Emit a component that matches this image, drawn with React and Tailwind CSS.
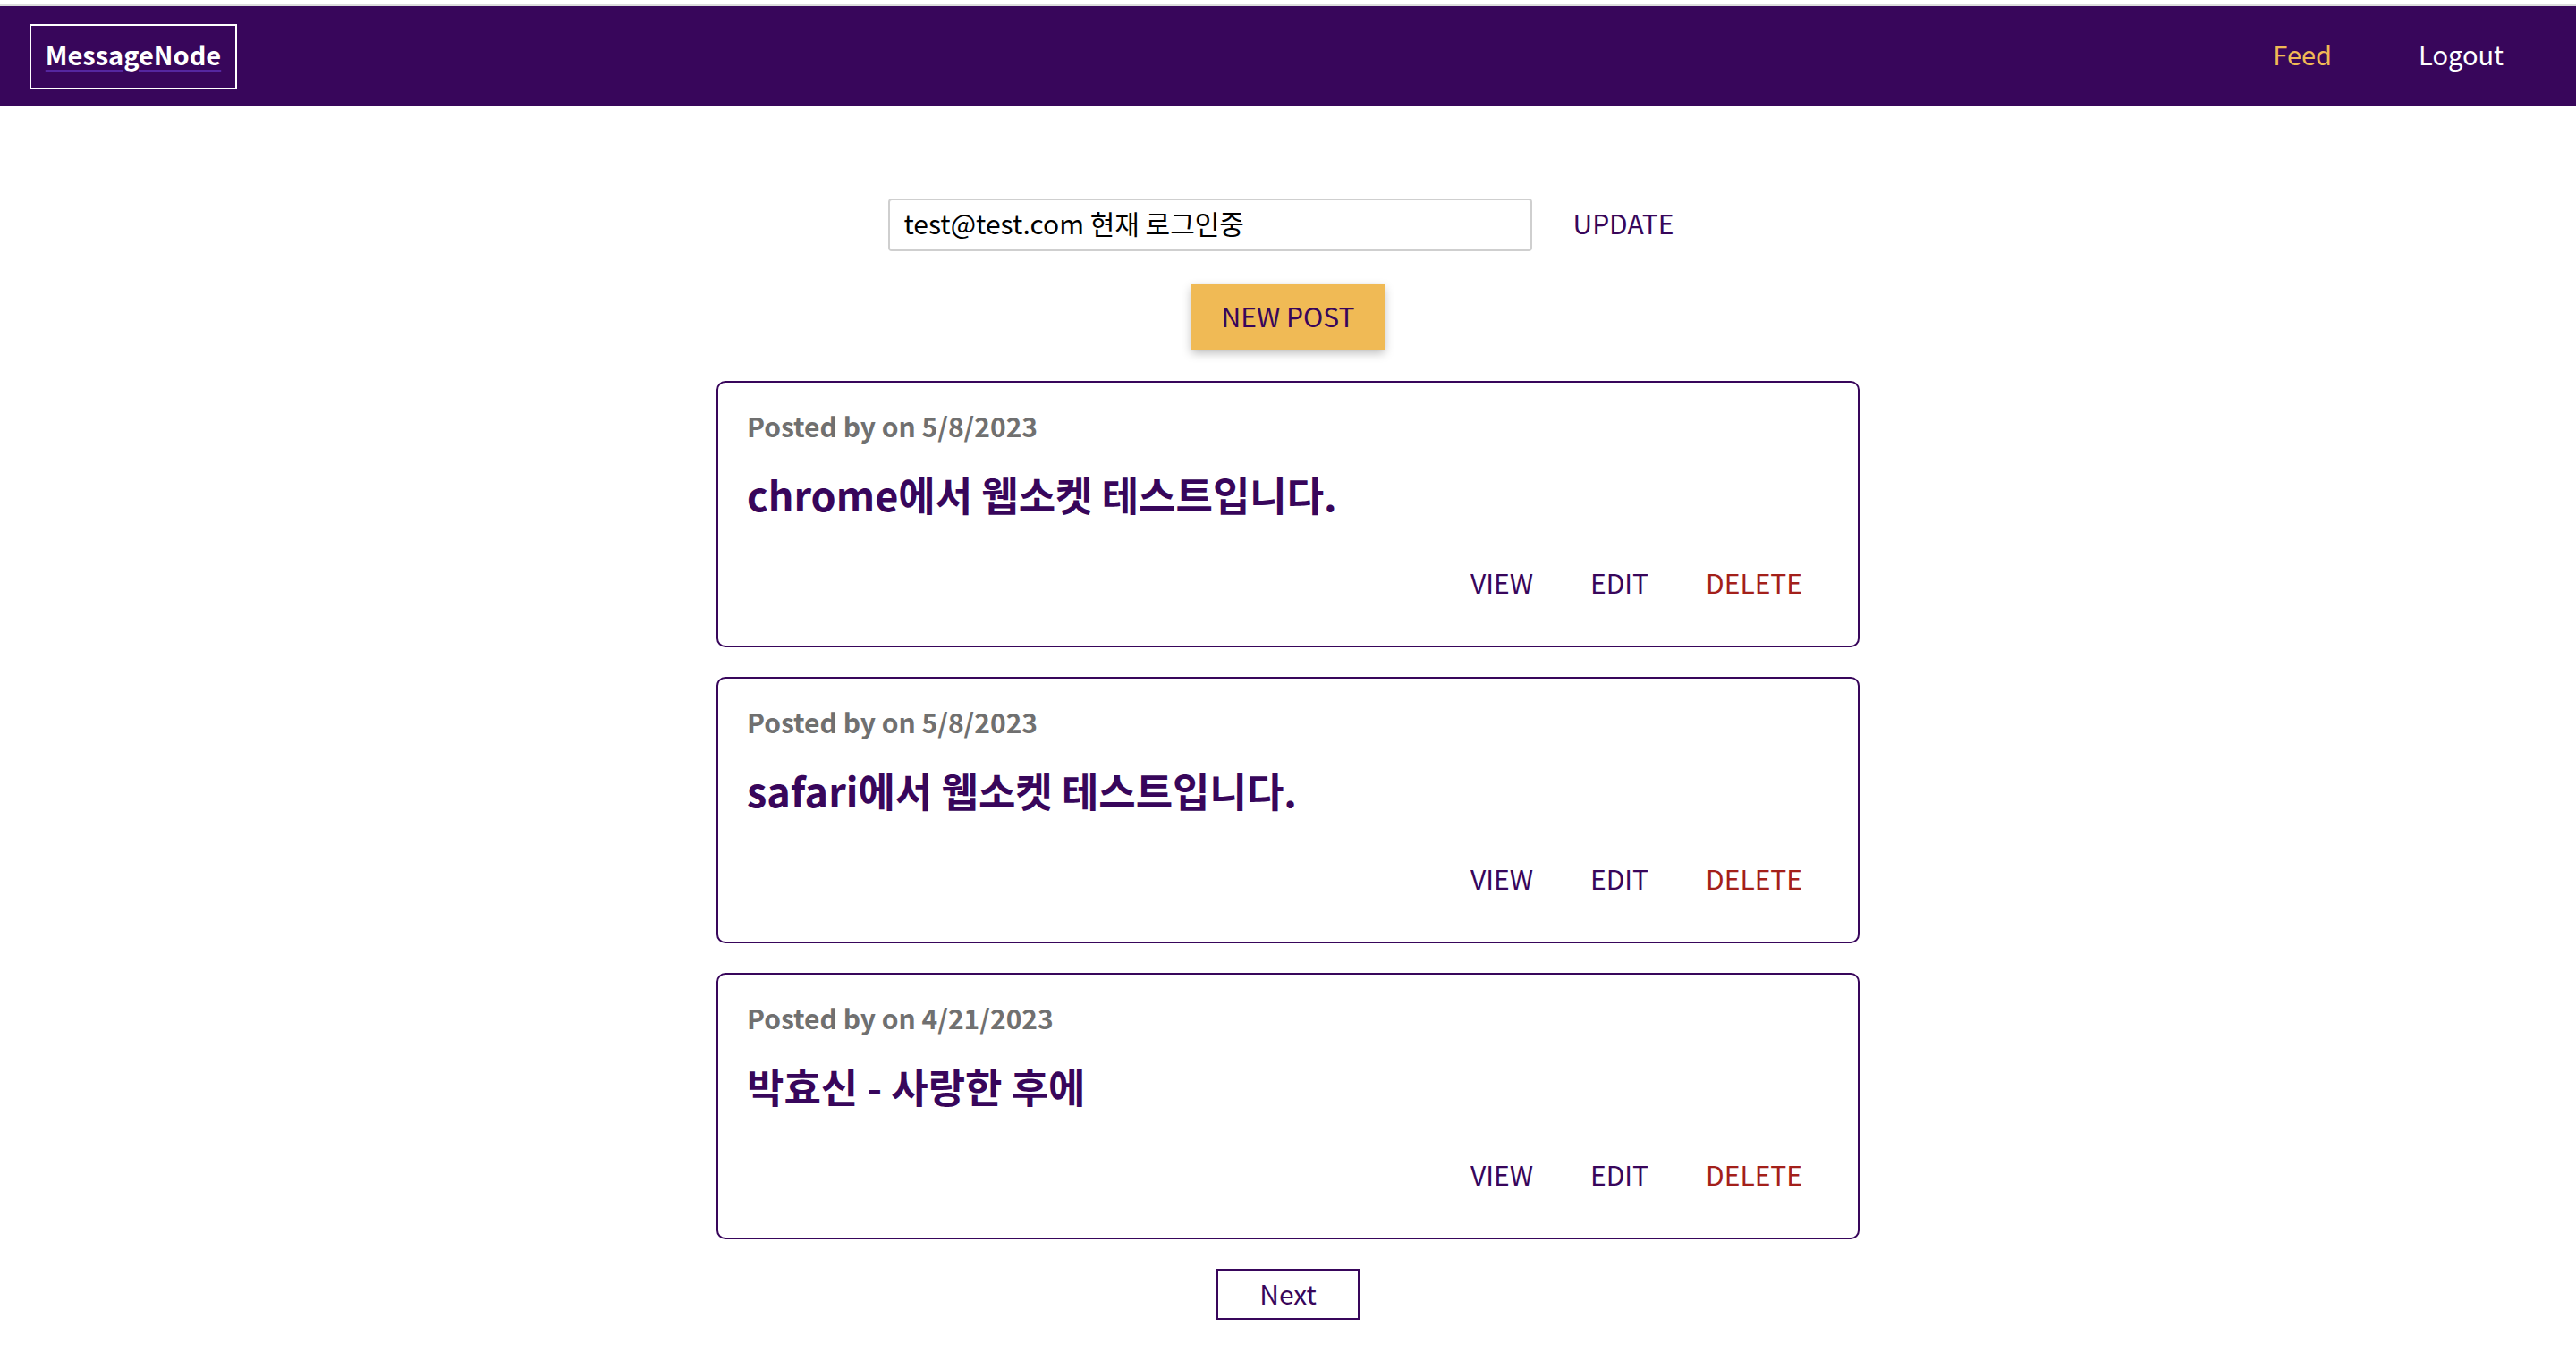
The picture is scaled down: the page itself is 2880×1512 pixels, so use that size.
const posts = [
  { id: 1, date: "5/8/2023", title: "chrome에서 웹소켓 테스트입니다." },
  { id: 2, date: "5/8/2023", title: "safari에서 웹소켓 테스트입니다." },
  { id: 3, date: "4/21/2023", title: "박효신 - 사랑한 후에" },
];

const font = { fontFamily: '"Noto Sans CJK KR", "Noto Sans", sans-serif' };

const PostCard = ({ post }) => (
  <article className="h-[298px] rounded-[10px] border-2 border-[#38065b] px-8 pt-[26px] flex flex-col">
    <h3 className="text-[30px] leading-[44px] font-semibold text-[#707070]">
      Posted by on {post.date}
    </h3>
    <h1 className="mt-[23px] text-[45px] leading-[64px] font-bold text-[#38065b]">
      {post.title}
    </h1>
    <div className="mt-[46px] flex justify-end gap-[64px] pr-[30px] text-[30px] leading-[40px]">
      <button className="px-0 text-[#38065b]">VIEW</button>
      <button className="px-0 text-[#38065b]">EDIT</button>
      <button className="px-0 text-[#a3201a]">DELETE</button>
    </div>
  </article>
);

export default function App() {
  return (
    <div className="min-h-screen bg-white" style={font}>
      <div className="h-[5px] bg-white" />
      <div className="h-[2px] bg-[#dcdcdc]" />
      <header className="h-[112px] bg-[#38065b] flex items-center justify-between pl-[33px] pr-[81px]">
        <div className="h-[73px] w-[232px] border-2 border-white flex items-center justify-center pb-[4px]">
          <span className="text-[29px] font-bold text-white underline decoration-[#5526a0] decoration-[3px] underline-offset-[5px]">
            MessageNode
          </span>
        </div>
        <nav className="flex items-center gap-[97px] text-[29px] pb-[4px]">
          <span className="text-[#f0b955]">Feed</span>
          <span className="text-white">Logout</span>
        </nav>
      </header>

      <main className="flex flex-col items-center">
        <div className="mt-[103px] flex items-center gap-[46px] pr-[16px]">
          <div className="h-[59px] w-[720px] rounded-[4px] border-2 border-[#cfcfcf] flex items-center px-[16px] pb-[5px] text-[30px] text-black">
            test@test.com 현재 로그인중
          </div>
          <span className="text-[30px] text-[#38065b] pb-[5px]">UPDATE</span>
        </div>

        <button className="mt-[37px] h-[73px] w-[216px] bg-[#f0ba55] text-[30px] text-[#38065b] pb-[2px] shadow-[0_4px_10px_rgba(0,0,0,0.26)]">
          NEW POST
        </button>

        <section className="mt-[35px] w-[1278px] flex flex-col gap-[33px]">
          {posts.map((p) => (
            <PostCard key={p.id} post={p} />
          ))}
        </section>

        <button className="mt-[33px] h-[57px] w-[160px] border-2 border-[#38065b] text-[30px] text-[#38065b] pb-[3px]">
          Next
        </button>
      </main>
    </div>
  );
}
